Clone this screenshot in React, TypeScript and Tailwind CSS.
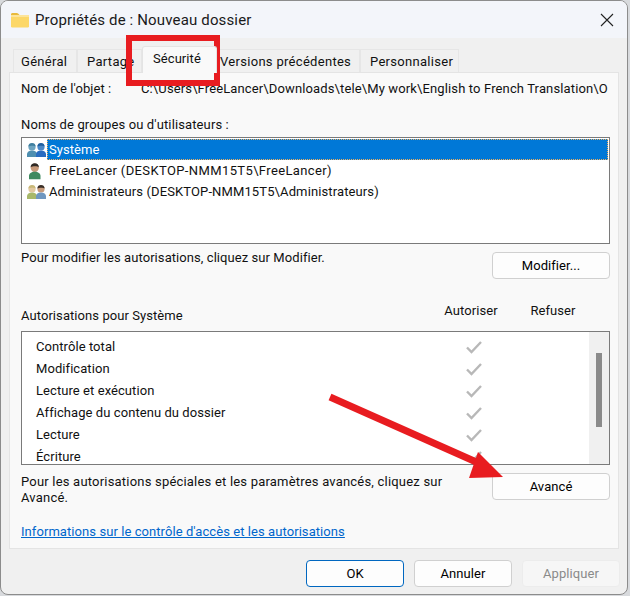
import React from 'react';

const tabs = [
  { label: 'Général', w: 'w-[64px]', pl: 'pl-[7px]' },
  { label: 'Partage', w: 'w-[65px]', pl: 'pl-[9px]' },
  { label: 'Sécurité', w: 'w-[75px]', pl: 'pl-[10px]', active: true },
  { label: 'Versions précédentes', w: 'w-[143px]', pl: 'pl-[2px]' },
  { label: 'Personnaliser', w: 'w-[99px]', pl: 'pl-[9px]' },
];

const perms = [
  'Contrôle total',
  'Modification',
  'Lecture et exécution',
  'Affichage du contenu du dossier',
  'Lecture',
  'Écriture',
];

function Folder() {
  return (
    <svg width="18" height="16" viewBox="0 0 18 16">
      <path d="M0 2.5C0 1.5.7 1 1.5 1h4.2c.6 0 1 .2 1.4.6L8.5 3H0z" fill="#e8b93c" />
      <rect x="0" y="3" width="18" height="12.5" rx="1.2" fill="#fcd768" />
      <rect x="0" y="3" width="18" height="2" fill="#fde49a" />
    </svg>
  );
}

function Person({ x, head, body, skin = '#d9a47c' }: { x: number; head: string; body: string; skin?: string }) {
  return (
    <g transform={`translate(${x} 0)`}>
      <circle cx="5" cy="5" r="3.6" fill={skin} />
      <path d="M1.4 4.6C1.4 2 3 1 5 1s3.6 1 3.6 3.6C7.5 3.4 3 3.4 1.4 4.6z" fill={head} />
      <path d="M0 15v-3c0-2 2-3.6 5-3.6s5 1.6 5 3.6v3z" fill={body} />
    </g>
  );
}

function GroupIcon({ kind }: { kind: 'system' | 'user' | 'admin' }) {
  if (kind === 'system') {
    return (
      <svg width="20" height="16" viewBox="0 0 20 16">
        <Person x={0} head="#3f7f9f" body="#4f8fb0" skin="#6ea4c0" />
        <Person x={9} head="#1f5f9f" body="#2a6cc0" skin="#4a88c8" />
      </svg>
    );
  }
  if (kind === 'user') {
    return (
      <svg width="20" height="18" viewBox="0 0 20 18">
        <g transform="translate(2 0) scale(1.15)">
          <Person x={0} head="#2f2a26" body="#3f8a5f" skin="#c79a7a" />
        </g>
      </svg>
    );
  }
  return (
    <svg width="20" height="16" viewBox="0 0 20 16">
      <Person x={0} head="#c8b878" body="#a8b86a" skin="#e2c8a0" />
      <Person x={9} head="#3a2f28" body="#6f97c0" skin="#c79a7a" />
    </svg>
  );
}

function Check() {
  return (
    <svg width="18" height="16" viewBox="0 0 18 16">
      <path d="M2 8.5l4.5 4.5L16 3" fill="none" stroke="#b8b8b8" strokeWidth="2.4" />
    </svg>
  );
}

function Btn({ label, className = '' }: { label: string; className?: string }) {
  return (
    <button className={`h-[27px] w-[98px] rounded-[4px] border border-[#d0d0d0] bg-[#fdfdfd] text-[13px] text-black ${className}`}>
      {label}
    </button>
  );
}

export default function App() {
  return (
    <div className="relative h-[596px] w-[630px] overflow-hidden bg-[#d8dadd] font-['Roboto','Liberation_Sans',sans-serif] text-[13px] leading-[16px] tracking-[0.07px] text-[#111]">
      <div className="h-[595px] w-[628px] overflow-hidden rounded-[8px] border border-[#8c8c8c] bg-[#f0f0f0]">
        {/* Title bar */}
        <div className="flex h-[37px] items-center bg-[#f3f5fa] pl-[10px] pr-[13px]">
          <Folder />
          <span className="ml-[6px] text-[15px] tracking-[0.15px] text-[#1a1a1a]">Propriétés de : Nouveau dossier</span>
          <svg className="ml-auto" width="14" height="14" viewBox="0 0 14 14">
            <path d="M1 1l12 12M13 1L1 13" stroke="#222" strokeWidth="1.1" />
          </svg>
        </div>

        {/* Tabs */}
        <div className="ml-[12px] flex h-[34px] items-end">
          {tabs.map((t) =>
            t.active ? (
              <div key={t.label} className={`${t.w} ${t.pl} relative z-10 -mb-px h-[27px] rounded-t-[3px] border border-b-0 border-[#e4e4e4] bg-[#f9f9f9] pt-[4px]`}>
                {t.label}
              </div>
            ) : (
              <div key={t.label} className={`${t.w} ${t.pl} h-[23px] whitespace-nowrap border border-b-0 border-[#e6e6e6] bg-[#f0f0f0] pt-[4px] tracking-[0.3px]`}>
                {t.label}
              </div>
            ),
          )}
        </div>

        {/* Panel */}
        <div className="mx-[8px] h-[477px] w-[610px] border border-[#e4e4e4] bg-[#f9f9f9] pl-[11px] pr-[8px] pt-[8px]">
          <div className="flex h-[16px]">
            <span className="w-[120px]">Nom de l'objet :</span>
            <span className="whitespace-nowrap tracking-[0.13px]">C:\Users\FreeLancer\Downloads\tele\My work\English to French Translation\O</span>
          </div>

          <div className="mt-[20px] tracking-[0.12px]">Noms de groupes ou d'utilisateurs :</div>

          <div className="mt-[4px] h-[107px] w-[589px] border border-[#7a7a7a] bg-white pl-[5px] pr-px pt-[1px]">
            <div className="flex h-[21px] items-center">
              <GroupIcon kind="system" />
              <span className="flex h-[21px] flex-1 items-center border border-dotted border-[#f0b060] bg-[#0078d7] pl-px text-white">Système</span>
            </div>
            <div className="flex h-[21px] items-center">
              <GroupIcon kind="user" />
              <span className="ml-[2px] tracking-[0.38px]">FreeLancer (DESKTOP-NMM15T5\FreeLancer)</span>
            </div>
            <div className="flex h-[21px] items-center">
              <GroupIcon kind="admin" />
              <span className="ml-[2px] tracking-[0.12px]">Administrateurs (DESKTOP-NMM15T5\Administrateurs)</span>
            </div>
          </div>

          <div className="mt-[8px] flex h-[27px] items-start justify-between">
            <span className="-mt-[2px]">Pour modifier les autorisations, cliquez sur Modifier.</span>
            <Btn label="Modifier..." className="w-[118px]" />
          </div>

          <div className="mt-[22px] flex h-[30px] w-[589px]">
            <span className="mt-[7px] flex-1">Autorisations pour Système</span>
            <span className="mt-[2px] w-[66px] text-center">Autoriser</span>
            <span className="mt-[2px] ml-[17px] w-[64px] text-center">Refuser</span>
            <span className="w-[25px]" />
          </div>

          <div className="flex h-[134px] w-[589px] overflow-hidden border border-[#7a7a7a] bg-white">
            <div className="flex-1 pl-[14px] pt-[4px]">
              {perms.map((p) => (
                <div key={p} className="flex h-[22px] items-center">
                  <span className="flex-1">{p}</span>
                  <span className="mr-[106px] flex">
                    <Check />
                  </span>
                </div>
              ))}
            </div>
            <div className="w-[20px] bg-[#f0f0f0] pl-[7px] pt-[21px]">
              <div className="h-[74px] w-[6px] bg-[#8a8a8a]" />
            </div>
          </div>

          <div className="mt-[8px] flex h-[26px] w-[589px] justify-between">
            <span className="mt-[1px] w-[440px] tracking-[0.2px]">Pour les autorisations spéciales et les paramètres avancés, cliquez sur Avancé.</span>
            <Btn label="Avancé" className="w-[118px]" />
          </div>

          <a className="mt-[25px] block text-[#0066cc] underline">Informations sur le contrôle d'accès et les autorisations</a>
        </div>

        {/* Footer buttons */}
        <div className="mt-[11px] flex justify-end gap-[10px] pr-[7px]">
          <Btn label="OK" className="!border-[#0067c0]" />
          <Btn label="Annuler" />
          <Btn label="Appliquer" className="!border-[#ececec] !bg-[#f6f6f6] !text-[#8a8a8a]" />
        </div>
      </div>

      {/* Red annotations drawn on the screenshot */}
      <svg className="pointer-events-none absolute inset-0" width="630" height="596" viewBox="0 0 630 596">
        <rect x="129" y="38" width="88" height="45" fill="none" stroke="#e81c20" strokeWidth="6" />
        <path d="M330 397L483 465" stroke="#e81c20" strokeWidth="7" />
        <path d="M478 452L503 477L469 478z" fill="#e81c20" />
      </svg>
    </div>
  );
}
